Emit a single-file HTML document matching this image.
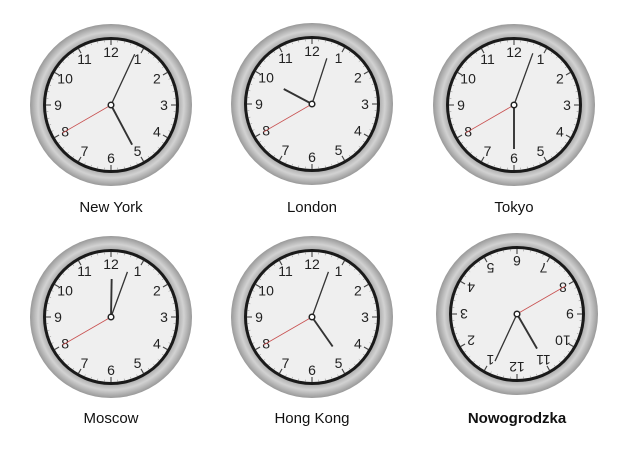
<!DOCTYPE html>
<html><head><meta charset="utf-8"><style>
html,body{margin:0;padding:0;background:#fff;width:626px;height:472px;overflow:hidden}
svg{position:absolute;left:0;top:0}
</style></head><body>
<svg id="s" width="626" height="472" xmlns="http://www.w3.org/2000/svg"></svg>
<script>
const clocks=[
 {cx:111,cy:105,m:25,h:152,hl:45,ml:56,label:"New York",ly:212},
 {cx:312,cy:104,m:18,h:298,hl:32,ml:48,label:"London",ly:212},
 {cx:514,cy:105,m:20,h:180,hl:44,ml:55,label:"Tokyo",ly:212},
 {cx:111,cy:317,m:20,h:1,hl:38,ml:48,label:"Moscow",ly:423},
 {cx:312,cy:317,m:20,h:145,hl:36,ml:48,label:"Hong Kong",ly:423},
 {cx:517,cy:314,m:25,h:330,hl:40,ml:52,label:"Nowogrodzka",ly:423,rot:true,bold:true}
];
let out="<defs><radialGradient id='g' cx='50%' cy='50%' r='50%'><stop offset='0.82' stop-color='#a8a8a8'/><stop offset='0.9' stop-color='#d2d2d2'/><stop offset='1' stop-color='#999'/></radialGradient></defs>";
function p(a,r,c){const t=a*Math.PI/180;return [c.cx+r*Math.sin(t),c.cy-r*Math.cos(t)];}
for(const c of clocks){
 let g="";
 g+=`<circle cx="${c.cx}" cy="${c.cy}" r="81" fill="url(#g)"/>`;
 g+=`<circle cx="${c.cx}" cy="${c.cy}" r="68" fill="#1a1a1a"/>`;
 g+=`<circle cx="${c.cx}" cy="${c.cy}" r="65" fill="#efefef"/>`;
 for(let i=0;i<60;i++){const a=i*6;const [x1,y1]=p(a,65,c);const [x2,y2]=p(a,i%5?63:60,c);
  g+=`<line x1="${x1}" y1="${y1}" x2="${x2}" y2="${y2}" stroke="${i%5?'#888':'#444'}" stroke-width="${i%5?0.5:1.1}"/>`;}
 for(let n=1;n<=12;n++){const [x,y]=p(n*30,53,c);
  g+=`<text x="${x}" y="${y+5}" font-family="Liberation Sans,sans-serif" font-size="14" text-anchor="middle" fill="#222">${n}</text>`;}
 const [hx,hy]=p(c.h,c.hl,c),[mx,my]=p(c.m,c.ml,c),[sx,sy]=p(240,56,c);
 g+=`<line x1="${c.cx}" y1="${c.cy}" x2="${hx}" y2="${hy}" stroke="#333" stroke-width="1.9"/>`;
 g+=`<line x1="${c.cx}" y1="${c.cy}" x2="${mx}" y2="${my}" stroke="#333" stroke-width="1.3"/>`;
 g+=`<line x1="${c.cx}" y1="${c.cy}" x2="${sx}" y2="${sy}" stroke="#c85050" stroke-width="0.8"/>`;
 g+=`<circle cx="${c.cx}" cy="${c.cy}" r="2.8" fill="#fff" stroke="#222" stroke-width="1.5"/>`;
 if(c.rot) g=`<g transform="rotate(180 ${c.cx} ${c.cy})">${g}</g>`;
 out+=g;
 out+=`<text x="${c.cx}" y="${c.ly}" font-family="Liberation Sans,sans-serif" font-size="15" ${c.bold?'font-weight="bold"':''} text-anchor="middle" fill="#111">${c.label}</text>`;
}
document.getElementById("s").innerHTML=out;
</script>
</body></html>
